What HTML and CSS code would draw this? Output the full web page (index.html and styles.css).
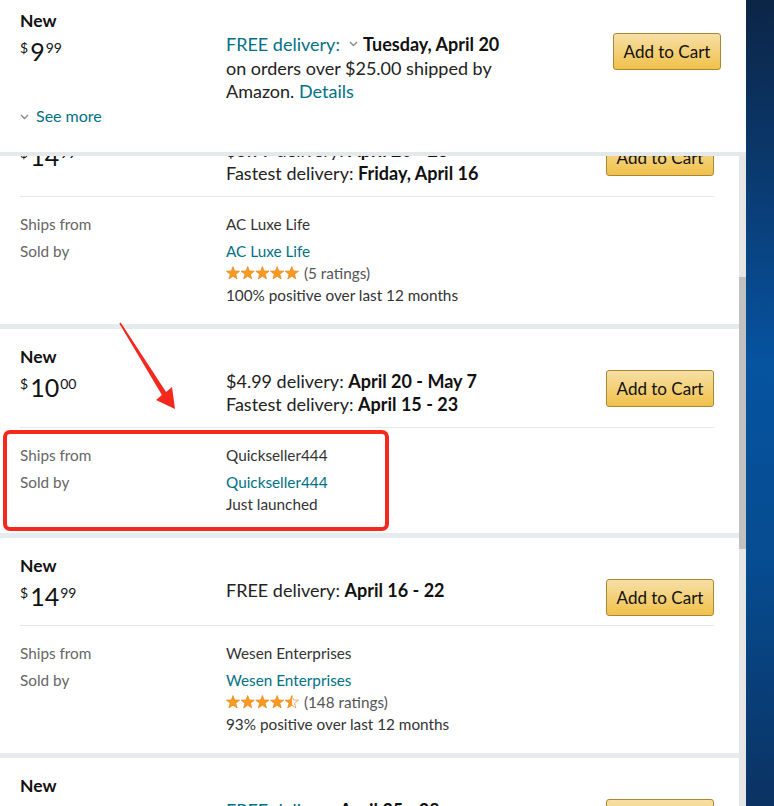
FILE: index.html
```html
<!DOCTYPE html>
<html lang="en">
<head>
<meta charset="utf-8">
<title>Offers</title>
<link rel="stylesheet" href="styles.css">
</head>
<body>
<div class="screen">
  <div class="window">
    <header class="top-panel">
      <div class="offer-row">
        <div class="cond">
          <div class="new">New</div>
          <div class="price"><span class="sym">$</span><span class="whole">9</span><span class="frac">99</span></div>
        </div>
        <div class="delivery">
          <span class="link">FREE delivery:</span><svg class="chev dchev" width="9" height="6" viewBox="0 0 9 6"><polyline points="1,1 4.5,4.5 8,1" fill="none" stroke="#8a8a8a" stroke-width="1.4"/></svg><b>Tuesday, April 20</b><br>
          on orders over $25.00 shipped by<br>
          Amazon. <span class="link">Details</span>
        </div>
        <button class="cart">Add to Cart</button>
      </div>
      <div class="see-more"><svg class="chev" width="9" height="6" viewBox="0 0 9 6"><polyline points="1,1 4.5,4.5 8,1" fill="none" stroke="#8a8a8a" stroke-width="1.4"/></svg><span class="link">See more</span></div>
    </header>

    <div class="viewport">
      <div class="list">
        <section class="card first">
          <div class="offer-row split">
            <div class="cond">
              <div class="new">New</div>
              <div class="price"><span class="sym">$</span><span class="whole">14</span><span class="frac">99</span></div>
            </div>
            <div class="delivery">
              $5.99 delivery: <b>April 20 - 23</b><br>
              Fastest delivery: <b>Friday, April 16</b>
            </div>
            <button class="cart">Add to Cart</button>
          </div>
          <div class="seller">
            <div class="label">Ships from</div>
            <div class="value">AC Luxe Life</div>
            <div class="label">Sold by</div>
            <div class="value">
              <div class="link">AC Luxe Life</div>
              <div class="rating"><svg class="stars" width="74" height="14" viewBox="0 0 74 14"><defs><polygon id="st" points="7,0.5 8.70,4.95 13.66,5.14 9.76,8.20 11.11,12.96 7,10.2 2.89,12.96 4.24,8.20 0.34,5.14 5.30,4.95"/></defs><g fill="#fb9a1e" stroke="#e57a10" stroke-width="0.6"><use href="#st" x="0"/><use href="#st" x="14.7"/><use href="#st" x="29.4"/><use href="#st" x="44.1"/><use href="#st" x="58.8"/></g></svg> (5 ratings)</div>
              <div>100% positive over last 12 months</div>
            </div>
          </div>
        </section>

        <section class="card">
          <div class="offer-row split">
            <div class="cond">
              <div class="new">New</div>
              <div class="price"><span class="sym">$</span><span class="whole">10</span><span class="frac">00</span></div>
            </div>
            <div class="delivery">
              $4.99 delivery: <b>April 20 - May 7</b><br>
              Fastest delivery: <b>April 15 - 23</b>
            </div>
            <button class="cart">Add to Cart</button>
          </div>
          <div class="seller">
            <div class="label">Ships from</div>
            <div class="value">Quickseller444</div>
            <div class="label">Sold by</div>
            <div class="value">
              <div class="link">Quickseller444</div>
              <div>Just launched</div>
            </div>
          </div>
        </section>

        <section class="card">
          <div class="offer-row split single">
            <div class="cond">
              <div class="new">New</div>
              <div class="price"><span class="sym">$</span><span class="whole">14</span><span class="frac">99</span></div>
            </div>
            <div class="delivery">
              FREE delivery: <b>April 16 - 22</b>
            </div>
            <button class="cart">Add to Cart</button>
          </div>
          <div class="seller">
            <div class="label">Ships from</div>
            <div class="value">Wesen Enterprises</div>
            <div class="label">Sold by</div>
            <div class="value">
              <div class="link">Wesen Enterprises</div>
              <div class="rating"><svg class="stars" width="74" height="14" viewBox="0 0 74 14"><defs><linearGradient id="half" x1="0" x2="1" y1="0" y2="0"><stop offset="0.5" stop-color="#fb9a1e"/><stop offset="0.5" stop-color="#ffffff"/></linearGradient></defs><g fill="#fb9a1e" stroke="#e57a10" stroke-width="0.6"><use href="#st" x="0"/><use href="#st" x="14.7"/><use href="#st" x="29.4"/><use href="#st" x="44.1"/><use href="#st" x="58.8" fill="url(#half)"/></g></svg> (148 ratings)</div>
              <div>93% positive over last 12 months</div>
            </div>
          </div>
        </section>

        <section class="card">
          <div class="offer-row split single">
            <div class="cond">
              <div class="new">New</div>
              <div class="price"><span class="sym">$</span><span class="whole">15</span><span class="frac">99</span></div>
            </div>
            <div class="delivery">
              <span class="link">FREE delivery</span> <b>April 25 - 28</b>
            </div>
            <button class="cart">Add to Cart</button>
          </div>
        </section>
      </div>
      <div class="scrollbar"><div class="thumb"></div></div>
    </div>

    <svg class="annotation" width="400" height="540" viewBox="0 0 400 540">
      <polygon points="120.7,322.6 166.1,392.1 172,387 175,409 156,400 161.9,394.9 119.3,323.4" fill="#f5281e"/>
      <rect x="5" y="432" width="382" height="97" rx="5" fill="none" stroke="#f5281e" stroke-width="4"/>
    </svg>
  </div>
  <div class="desktop"></div>
</div>
</body>
</html>
```

FILE: styles.css
```css
html, body {
  margin: 0;
  padding: 0;
}

body {
  font-family: Lato, "Open Sans", "Liberation Sans", sans-serif;
  color: #222;
  background: #fff;
  overflow: hidden;
}

.screen {
  display: flex;
  width: 774px;
  height: 806px;
  overflow: hidden;
}

.window {
  position: relative;
  width: 746px;
  flex-shrink: 0;
  display: flex;
  flex-direction: column;
  background: #fff;
}

.desktop {
  flex: 1;
  background: linear-gradient(180deg, #0c2546 0%, #0a3a70 22%, #0653a0 45%, #064c90 70%, #0b3262 100%);
}

.top-panel {
  height: 156px;
  box-sizing: border-box;
  flex-shrink: 0;
  padding: 11px 25px 0 20px;
  border-bottom: 4px solid #e4e9eb;
  background: #fff;
}

.top-panel .delivery {
  margin-top: 22px;
  line-height: 23.5px;
}

.top-panel .cart {
  margin-top: 22px;
}

.viewport {
  flex: 1;
  min-height: 0;
  display: flex;
  overflow: hidden;
}

.list {
  flex: 1;
  display: flex;
  flex-direction: column;
  gap: 5px;
  background: #e6ebed;
}

.card {
  flex-shrink: 0;
  background: #fff;
  padding: 18px 25px 0 20px;
}

.card.first {
  margin-top: -58px;
}

.offer-row {
  display: grid;
  grid-template-columns: 206px 1fr auto;
  align-items: start;
}

.offer-row.split {
  padding-bottom: 11px;
  border-bottom: 1px solid #e7e7e7;
}

.offer-row.single {
  padding-bottom: 9px;
}

.new {
  font-size: 17.5px;
  line-height: 20px;
  font-weight: 700;
  color: #111;
}

.price {
  display: flex;
  align-items: flex-start;
  height: 34px;
  color: #111;
}

.price .sym,
.price .frac {
  font-size: 14px;
  line-height: 1;
  margin-top: 10px;
}

.price .whole {
  font-size: 25px;
  line-height: 1;
  margin: 8px 1px 0 2px;
}

.delivery {
  margin-top: 23px;
  font-size: 18px;
  line-height: 23px;
  color: #222;
}

.delivery b {
  color: #111;
  font-weight: 700;
}

.link {
  color: #007185;
}

.chev {
  display: inline-block;
  vertical-align: middle;
}

.dchev {
  margin: 0 5px 4px 9px;
}

.cart {
  margin-top: 23px;
  width: 108px;
  height: 37px;
  box-sizing: border-box;
  border: 1px solid #a88734;
  border-radius: 3px;
  background: linear-gradient(180deg, #f7dfa5 0%, #f0c14b 100%);
  font-family: inherit;
  font-size: 17px;
  color: #111;
  padding: 0;
}

.see-more {
  margin-top: 1px;
  font-size: 16px;
  line-height: 22px;
  display: flex;
  align-items: center;
}

.see-more .chev {
  margin: 2px 7px 0 0;
}

.seller {
  display: grid;
  grid-template-columns: 206px 1fr;
  row-gap: 5px;
  padding: 16px 0 18px;
  font-size: 15.3px;
  line-height: 22px;
}

.label {
  color: #666;
}

.value {
  color: #333;
}

.rating {
  color: #555;
}

.stars {
  vertical-align: -1px;
}

.scrollbar {
  width: 7px;
  flex-shrink: 0;
  background: #e6e6e6;
  padding-top: 121px;
  box-sizing: border-box;
}

.thumb {
  height: 272px;
  background: #c1c1c1;
}

.annotation {
  position: absolute;
  left: 0;
  top: 0;
  pointer-events: none;
}
```
